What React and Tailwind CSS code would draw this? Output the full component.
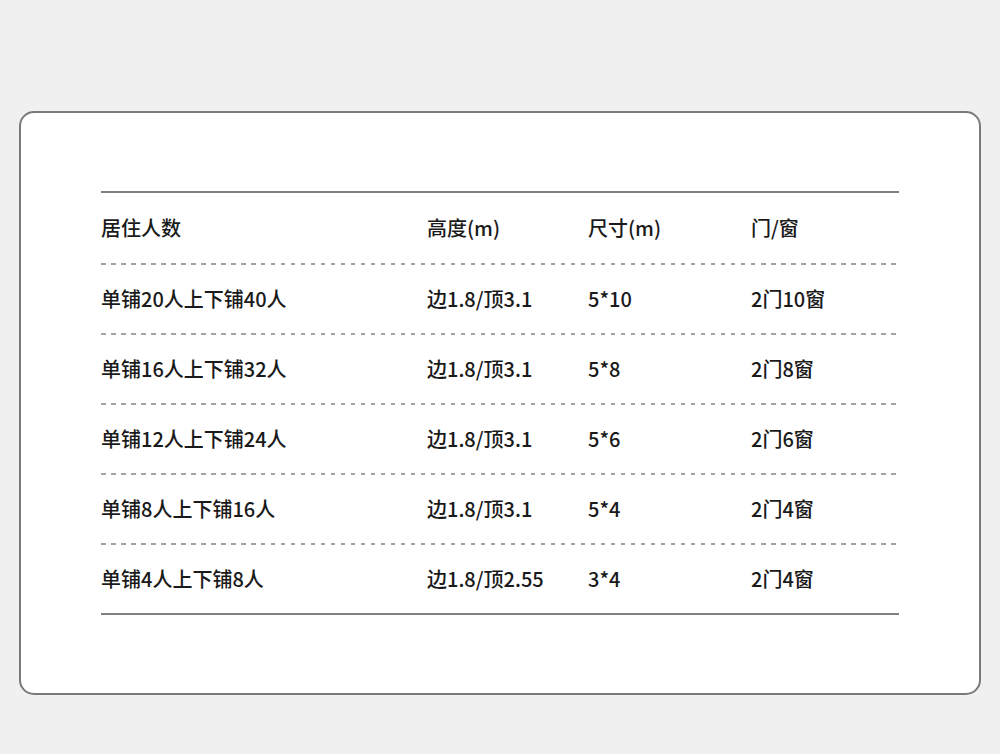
const rows = [
  ["单铺20人上下铺40人", "边1.8/顶3.1", "5*10", "2门10窗"],
  ["单铺16人上下铺32人", "边1.8/顶3.1", "5*8", "2门8窗"],
  ["单铺12人上下铺24人", "边1.8/顶3.1", "5*6", "2门6窗"],
  ["单铺8人上下铺16人", "边1.8/顶3.1", "5*4", "2门4窗"],
  ["单铺4人上下铺8人", "边1.8/顶2.55", "3*4", "2门4窗"],
];

const header = ["居住人数", "高度(m)", "尺寸(m)", "门/窗"];

function Row({ cells, tall }) {
  return (
    <div className={`grid grid-cols-[326px_161px_163px_1fr] items-center ${tall ? "h-[70px]" : "h-[68px]"}`}>
      {cells.map((c, i) => (
        <div key={i}>{c}</div>
      ))}
    </div>
  );
}

function Dashed() {
  return <div className="h-[2px] bg-[repeating-linear-gradient(90deg,#a3a3a3_0_4.5px,transparent_4.5px_10px)]" />;
}

export default function App() {
  return (
    <div className="h-[754px] w-[1000px] overflow-hidden bg-[#f0f0f0] pt-[111px] font-['Noto_Sans_CJK_SC','Noto_Sans',sans-serif]">
      <div className="mx-[19px] h-[584px] rounded-[15px] border-2 border-[#7a7a7a] bg-white px-[80px] pt-[78px] text-[20px] font-medium leading-none text-[#1a1a1a]">
        <div className="h-[2px] bg-[#808080]" />
        <Row cells={header} tall />
        {rows.map((r, i) => (
          <div key={i}>
            <Dashed />
            <Row cells={r} />
          </div>
        ))}
        <div className="h-[2px] bg-[#808080]" />
      </div>
    </div>
  );
}
